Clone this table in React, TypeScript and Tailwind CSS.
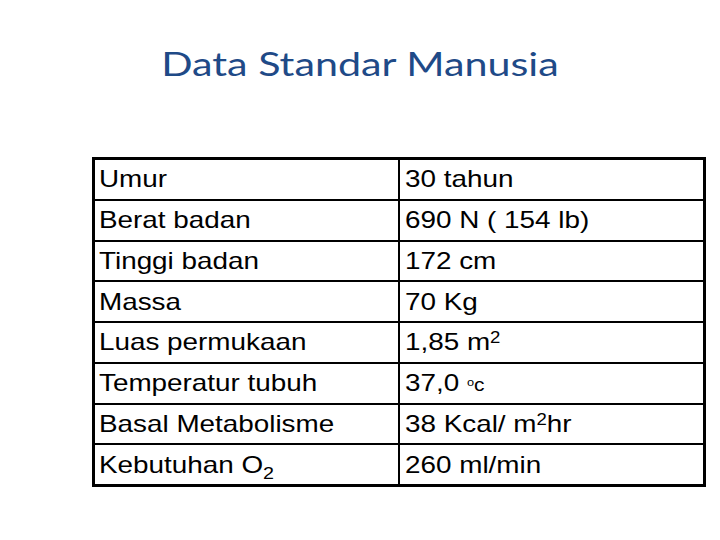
import React from "react";

const rows: { left: React.ReactNode; right: React.ReactNode }[] = [
  { left: "Umur", right: "30 tahun" },
  { left: "Berat badan", right: "690 N ( 154 lb)" },
  { left: "Tinggi badan", right: "172 cm" },
  { left: "Massa", right: "70 Kg" },
  {
    left: "Luas permukaan",
    right: (
      <>
        1,85 m<span className="relative -top-[7px] text-[16px]">2</span>
      </>
    ),
  },
  {
    left: "Temperatur tubuh",
    right: (
      <>
        37,0 <span className="relative -top-[5px] text-[11px]">o</span>
        <span className="text-[18px]">c</span>
      </>
    ),
  },
  {
    left: "Basal Metabolisme",
    right: (
      <>
        38 Kcal/ m<span className="relative -top-[7px] text-[16px]">2</span>hr
      </>
    ),
  },
  {
    left: (
      <>
        Kebutuhan O<span className="relative top-[6px] text-[17px]">2</span>
      </>
    ),
    right: "260 ml/min",
  },
];

export default function App() {
  return (
    <div className="w-[720px] h-[540px] bg-white overflow-hidden">
      <div className="pt-[47px] h-[157px] flex justify-center">
        <h1 className="h-[33px] text-[33px] leading-none text-[#1f4a87] font-['Lato',sans-serif] origin-center scale-x-[1.25] whitespace-nowrap">
          Data Standar Manusia
        </h1>
      </div>
      <div className="ml-[92px] w-[614px] border-[3px] border-black font-['Liberation_Sans',Arial,sans-serif] text-black">
        {rows.map((r, i) => (
          <div
            key={i}
            className={`flex ${i > 0 ? "h-[40.75px] border-t-2 border-black" : "h-[38.75px]"}`}
          >
            <div className="w-[305px] border-r-2 border-black flex items-center pl-[4px]">
              <span className="text-[24px] leading-none inline-block origin-left scale-x-[1.16] whitespace-nowrap">
                {r.left}
              </span>
            </div>
            <div className="flex-1 flex items-center pl-[5px]">
              <span className="text-[24px] leading-none inline-block origin-left scale-x-[1.16] whitespace-nowrap">
                {r.right}
              </span>
            </div>
          </div>
        ))}
      </div>
    </div>
  );
}
